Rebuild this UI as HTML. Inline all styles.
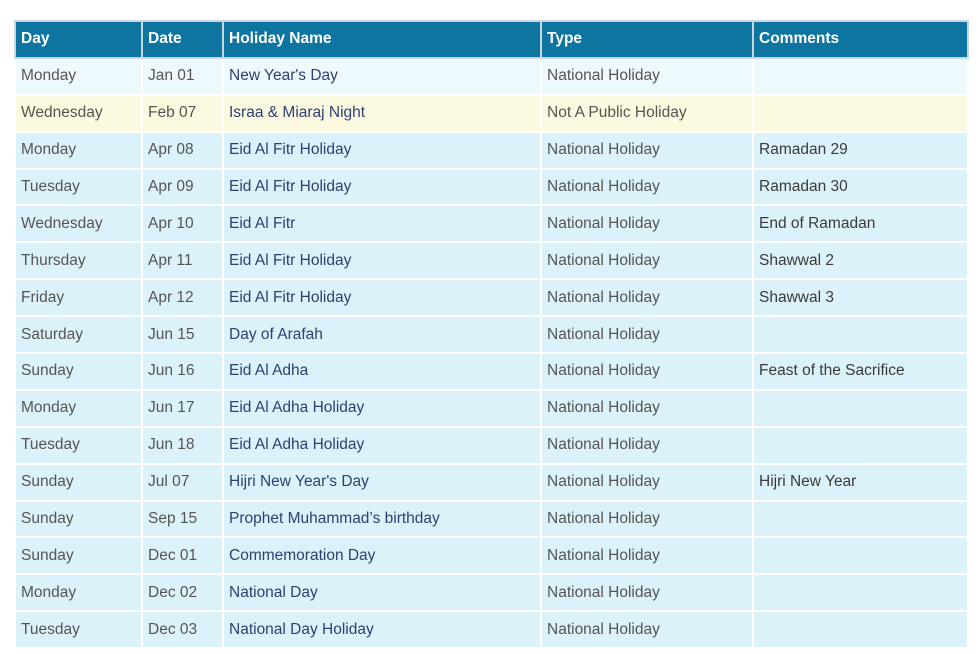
<!DOCTYPE html>
<html><head><style>
body{margin:0;background:#fff;font-family:"Liberation Sans",sans-serif;}
table{position:absolute;left:14px;top:20px;width:953px;border-collapse:collapse;table-layout:fixed;}
tr{height:36.9px;}
th,td{border:2px solid #fff;padding:0 0 0 5px;text-align:left;font-size:15.5px;white-space:nowrap;}
th{background:#0e75a0;color:#fff;font-weight:bold;border-color:#c9d6dd;}
td{background:#dbf2fa;color:#555;}
td:nth-child(3){color:#2e3f72;}
td:nth-child(5){color:#3a3a3a;}
tr.a td{background:#eef9fd;}
tr.b td{background:#fbf9df;}
</style></head><body>
<table>
<colgroup><col style="width:127px"><col style="width:81px"><col style="width:318px"><col style="width:212px"><col style="width:215px"></colgroup>
<tr><th>Day</th><th>Date</th><th>Holiday Name</th><th>Type</th><th>Comments</th></tr>
<tr class="a"><td>Monday</td><td>Jan 01</td><td>New Year's Day</td><td>National Holiday</td><td></td></tr>
<tr class="b"><td>Wednesday</td><td>Feb 07</td><td>Israa &amp; Miaraj Night</td><td>Not A Public Holiday</td><td></td></tr>
<tr><td>Monday</td><td>Apr 08</td><td>Eid Al Fitr Holiday</td><td>National Holiday</td><td>Ramadan 29</td></tr>
<tr><td>Tuesday</td><td>Apr 09</td><td>Eid Al Fitr Holiday</td><td>National Holiday</td><td>Ramadan 30</td></tr>
<tr><td>Wednesday</td><td>Apr 10</td><td>Eid Al Fitr</td><td>National Holiday</td><td>End of Ramadan</td></tr>
<tr><td>Thursday</td><td>Apr 11</td><td>Eid Al Fitr Holiday</td><td>National Holiday</td><td>Shawwal 2</td></tr>
<tr><td>Friday</td><td>Apr 12</td><td>Eid Al Fitr Holiday</td><td>National Holiday</td><td>Shawwal 3</td></tr>
<tr><td>Saturday</td><td>Jun 15</td><td>Day of Arafah</td><td>National Holiday</td><td></td></tr>
<tr><td>Sunday</td><td>Jun 16</td><td>Eid Al Adha</td><td>National Holiday</td><td>Feast of the Sacrifice</td></tr>
<tr><td>Monday</td><td>Jun 17</td><td>Eid Al Adha Holiday</td><td>National Holiday</td><td></td></tr>
<tr><td>Tuesday</td><td>Jun 18</td><td>Eid Al Adha Holiday</td><td>National Holiday</td><td></td></tr>
<tr><td>Sunday</td><td>Jul 07</td><td>Hijri New Year's Day</td><td>National Holiday</td><td>Hijri New Year</td></tr>
<tr><td>Sunday</td><td>Sep 15</td><td>Prophet Muhammad’s birthday</td><td>National Holiday</td><td></td></tr>
<tr><td>Sunday</td><td>Dec 01</td><td>Commemoration Day</td><td>National Holiday</td><td></td></tr>
<tr><td>Monday</td><td>Dec 02</td><td>National Day</td><td>National Holiday</td><td></td></tr>
<tr><td>Tuesday</td><td>Dec 03</td><td>National Day Holiday</td><td>National Holiday</td><td></td></tr>
</table>
</body></html>
